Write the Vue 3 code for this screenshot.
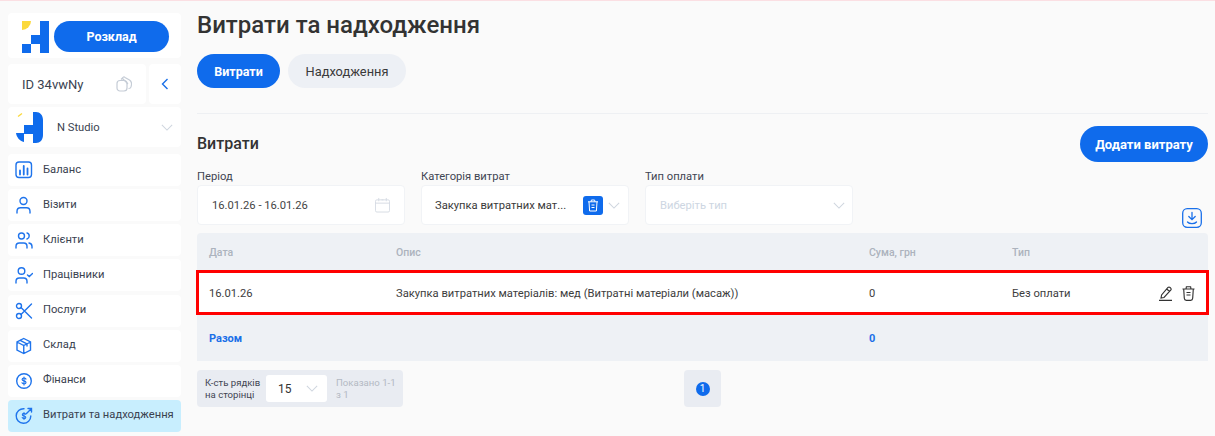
<script setup>
const menu = [
  { label: 'Баланс', icon: 'chart' },
  { label: 'Візити', icon: 'user' },
  { label: 'Клієнти', icon: 'users' },
  { label: 'Працівники', icon: 'check' },
  { label: 'Послуги', icon: 'scissors' },
  { label: 'Склад', icon: 'box' },
  { label: 'Фінанси', icon: 'coin' },
  { label: 'Витрати та надходження', icon: 'coinout', active: true }
]
</script>

<template>
  <div class="page">
    <aside class="side">
      <div class="card logo-card">
        <svg class="logo" width="27" height="32" viewBox="0 0 27 32">
          <path d="M0 0h9a9 9 0 0 1-9 9z" fill="#fbd93c" />
          <path d="M18 0h9v32h-9V23H9v-9h9zM0 23h9v9H0z" fill="#0f6bec" />
        </svg>
        <button class="pill sched">Розклад</button>
      </div>
      <div class="id-row">
        <div class="card id-card">
          <span>ID 34vwNy</span>
          <svg width="16" height="16" viewBox="0 0 16 16" fill="none" stroke="#c5ccd6" stroke-width="1.2">
            <rect x="1" y="4.5" width="10" height="10.5" rx="3" />
            <path d="M5 3.5 7 1.4c.6-.5 1.400-.5 2 0l4.500 2.700c1.500 1 2.200 2.500 2 4.400l-.5 2.500c-.2 1-1 1.500-2.500 1.500M6 1.800 12 8" />
          </svg>
        </div>
        <div class="card back-card">
          <svg width="8" height="12" viewBox="0 0 8 12" fill="none" stroke="#1a6fe8" stroke-width="1.4"><path d="M6.500 1 1.500 6l5 5" /></svg>
        </div>
      </div>
      <div class="card studio">
        <svg width="27" height="31" viewBox="0 0 27 31">
          <path d="M2 4.500 6 1.500" stroke="#fbd93c" stroke-width="1.300" fill="none" />
          <path d="M17 0h3c4 0 7 3 7 8v15c0 5-3 8-7 8h-3v-9H8v-9h9zM0 21h8v9C3.500 29 .5 25 0 21z" fill="#0f6bec" />
        </svg>
        <span class="studio-name">N Studio</span>
        <svg width="12" height="7" viewBox="0 0 14 8" fill="none" stroke="#cfd6df" stroke-width="1.200"><path d="M1 1l6 6 6-6" /></svg>
      </div>
      <nav class="menu">
        <a v-for="m in menu" :key="m.label" class="item" :class="{ active: m.active }">
          <svg class="mi" width="18" height="18" viewBox="0 0 18 18" fill="none" stroke="#1f74ec" stroke-width="1.400" stroke-linecap="round">
            <template v-if="m.icon === 'chart'">
              <rect x="1" y="1" width="15.500" height="15.500" rx="3" />
              <path d="M5 9.500V13.500M8.750 5V13.500M12.500 7.500V13.500" stroke-width="1.800" />
            </template>
            <template v-else-if="m.icon === 'user'">
              <circle cx="8.500" cy="5" r="3.500" />
              <path d="M2 17v-1.500c0-2.500 1.500-3.700 3.500-3.700h6c2 0 3.500 1.200 3.500 3.700V17" />
            </template>
            <template v-else-if="m.icon === 'users'">
              <circle cx="6.500" cy="5" r="3" />
              <path d="M1 17v-1.500c0-2.200 1.400-3.500 3.300-3.500h4.400c1.900 0 3.300 1.300 3.300 3.500V17M12 2c1.500.3 2.200 1.500 2.200 3s-.7 2.500-2.200 3M14 12c2 .3 3 1.800 3 3.500V17" />
            </template>
            <template v-else-if="m.icon === 'check'">
              <circle cx="6.500" cy="5" r="3.300" />
              <path d="M1 17v-1.500c0-2.200 1.400-3.500 3.300-3.500h4.400c1.900 0 3.300 1.300 3.300 3.500V17M12.500 9l1.800 1.600L17.500 7.500" />
            </template>
            <template v-else-if="m.icon === 'scissors'">
              <circle cx="4" cy="4" r="2.500" />
              <circle cx="4" cy="14" r="2.500" />
              <path d="M6 5.500 16.500 16M6 12.500 16.500 2" />
            </template>
            <template v-else-if="m.icon === 'box'">
              <path d="M8.750 1.500 15.500 5v8l-6.750 3.500L2 13V5zM2 5l6.750 3.500L15.500 5M8.750 8.500v8M5.200 3.300l6.800 3.600V9" />
            </template>
            <template v-else-if="m.icon === 'coin'">
              <circle cx="9" cy="9" r="7.300" />
              <path d="M11 7.100C10.500 6.300 9.800 6 9 6c-1.100 0-1.900.6-1.900 1.500 0 2 3.900.9 3.900 2.900 0 .9-.9 1.500-2 1.500-.9 0-1.600-.3-2-1.100M9 5v8" stroke-width="1.200" />
            </template>
            <template v-else>
              <path d="M15.800 9A7.300 7.300 0 1 1 9 1.700M11.500 6.500 16.500 1.500M13 1.500h3.500V5" />
              <path d="M10.700 7.300C10.300 6.600 9.700 6.400 9 6.400c-1 0-1.700.5-1.700 1.300 0 1.800 3.500.8 3.500 2.600 0 .8-.8 1.300-1.800 1.300-.8 0-1.400-.3-1.800-1M9 5.500v7" stroke-width="1.100" />
            </template>
          </svg>
          <span>{{ m.label }}</span>
        </a>
      </nav>
    </aside>

    <main class="main">
      <h1>Витрати та надходження</h1>
      <div class="tabs">
        <button class="pill tab-on">Витрати</button>
        <button class="pill tab-off">Надходження</button>
      </div>
      <div class="rule"></div>
      <div class="head-row">
        <h2>Витрати</h2>
        <button class="pill add">Додати витрату</button>
      </div>

      <div class="filters">
        <div class="field">
          <label>Період</label>
          <div class="input">
            <span class="date">16.01.26 - 16.01.26</span>
            <svg width="15" height="16" viewBox="0 0 16 16" fill="none" stroke="#d5dbe3" stroke-width="1"><rect x=".5" y="2.500" width="15" height="13" rx="1.500" /><path d="M.5 6h15M4 .5v3.500M12 .5v3.500M7 2.500h2" /></svg>
          </div>
        </div>
        <div class="field">
          <label>Категорія витрат</label>
          <div class="input cat">
            <span class="cat-text">Закупка витратних мат...</span>
            <span class="del">
              <svg width="12" height="13" viewBox="0 0 12 13" fill="none" stroke="#fff" stroke-width="1"><path d="M1 2.800h10M4 2.800 4.400 1h3.200L8 2.800M2 2.800l.6 9.200h6.800l.6-9.200M4.500 6h3M4.500 8.500h3" /></svg>
            </span>
            <svg width="12" height="7" viewBox="0 0 14 8" fill="none" stroke="#cfd6df" stroke-width="1.200"><path d="M1 1l6 6 6-6" /></svg>
          </div>
        </div>
        <div class="field">
          <label>Тип оплати</label>
          <div class="input sel">
            <span class="ph">Виберіть тип</span>
            <svg width="12" height="7" viewBox="0 0 14 8" fill="none" stroke="#cfd6df" stroke-width="1.200"><path d="M1 1l6 6 6-6" /></svg>
          </div>
        </div>
        <svg class="dl" width="20" height="20" viewBox="0 0 20 20" fill="none" stroke="#1a70ea" stroke-width="1.300" stroke-linecap="round">
          <rect x=".7" y=".7" width="18.600" height="18.600" rx="4.500" />
          <path d="M10 4.500v7M6.800 8.500 10 11.700l3.200-3.200M5.500 14c1 1.200 2.500 1.700 4.500 1.700s3.500-.5 4.500-1.700" />
        </svg>
      </div>

      <section class="table">
        <div class="tr th"><span>Дата</span><span>Опис</span><span>Сума, грн</span><span>Тип</span></div>
        <div class="tr row">
          <span>16.01.26</span>
          <span>Закупка витратних матеріалів: мед (Витратні матеріали (масаж))</span>
          <span>0</span>
          <span class="type-cell">
            Без оплати
            <span class="acts">
              <svg width="15" height="15" viewBox="0 0 14 15" fill="none" stroke="#333" stroke-width="1.150"><path d="M.5 14.400h13M2.500 12l.6-3L9.500 1.500c.6-.6 1.400-.6 2 0l.7.700c.6.600.6 1.300 0 1.900L5.500 11.500zM8.300 3l2.700 2.500" /></svg>
              <svg width="13" height="15" viewBox="0 0 13 15" fill="none" stroke="#333" stroke-width="1.150"><path d="M.5 3h12M4 3l.4-2.300h4.200L9 3M1.700 3l.6 9.300c.1 1.300.8 2 2 2h4.400c1.200 0 1.900-.7 2-2L11.300 3M4.500 6.500h4M4.500 9h4" /></svg>
            </span>
          </span>
        </div>
        <div class="tr total"><span>Разом</span><span></span><span>0</span><span></span></div>
      </section>

      <div class="pager">
        <div class="per">
          <span class="per-label">К-сть рядків<br />на сторінці</span>
          <div class="per-sel">
            <span>15</span>
            <svg width="12" height="7" viewBox="0 0 14 8" fill="none" stroke="#cfd6df" stroke-width="1.200"><path d="M1 1l6 6 6-6" /></svg>
          </div>
          <span class="shown">Показано 1-1<br />з 1</span>
        </div>
        <div class="pages"><span class="num">1</span></div>
      </div>
    </main>
  </div>
</template>

<style>
html, body { margin: 0; background: #fafafa; }
</style>

<style scoped>
.page {
  display: flex;
  width: 1215px;
  height: 436px;
  box-sizing: border-box;
  overflow: hidden;
  border-top: 1px solid #fbdfe3;
  background: #fafafa;
  font-family: Roboto, sans-serif;
  color: #3a4250;
  font-size: 11.200px;
}
.side {
  width: 173px;
  margin-left: 8px;
  padding-top: 12px;
  display: flex;
  flex-direction: column;
}
.card { background: #fff; border-radius: 4px; }
.logo-card {
  height: 45px;
  display: flex;
  align-items: center;
  padding: 2px 12px 0 14px;
  box-sizing: border-box;
  gap: 5px;
}
.logo { flex: none; }
.pill {
  border: 0;
  border-radius: 18px;
  font-family: inherit;
  display: flex;
  align-items: center;
  justify-content: center;
}
.sched {
  width: 115px;
  height: 31px;
  background: #0f6bec;
  color: #fff;
  font-size: 12.500px;
  font-weight: 700;
}
.id-row { display: flex; gap: 3px; margin-top: 6px; }
.id-card {
  width: 138px;
  height: 40px;
  display: flex;
  align-items: center;
  justify-content: space-between;
  padding: 0 14px;
  box-sizing: border-box;
  font-size: 13px;
}
.back-card { width: 32px; height: 40px; display: flex; align-items: center; justify-content: center; }
.studio {
  height: 40px;
  margin-top: 3px;
  display: flex;
  align-items: center;
  padding: 0 8px;
  box-sizing: border-box;
}
.studio-name { margin-left: 14px; font-size: 11.200px; flex: 1; }
.menu { display: flex; flex-direction: column; gap: 3.150px; margin-top: 7px; }
.item {
  height: 32px;
  background: #fff;
  border-radius: 4px;
  display: flex;
  align-items: center;
  padding: 0 0 2px 7px;
  box-sizing: border-box;
  font-size: 11.200px;
  white-space: nowrap;
}
.item.active { background: #c8eefe; }
.mi { flex: none; margin: 2px 10px 0 0; }

.main { width: 1011px; margin-left: 16px; }
h1 {
  margin: 10px 0 0;
  font-size: 24px;
  line-height: 28px;
  font-weight: 500;
  color: #333;
}
.tabs { display: flex; gap: 8px; margin-top: 15px; }
.tab-on, .tab-off { height: 34px; font-size: 12.500px; }
.tab-on { width: 83px; background: #0f6bec; color: #fff; font-weight: 700; }
.tab-off { width: 118px; background: #edf0f5; color: #3a3a3a; font-size: 12.800px; font-weight: 400; }
.rule { height: 1px; background: #eef0f3; margin-top: 25px; }
.head-row { display: flex; align-items: center; justify-content: space-between; margin-top: 12px; }
h2 { margin: 0 0 2px; font-size: 16px; font-weight: 500; color: #333; }
.add { width: 128px; height: 36px; background: #0f6bec; color: #fff; font-size: 13px; font-weight: 700; }
.filters { display: flex; gap: 16px; margin-top: 7px; position: relative; }
.field { width: 208px; }
label { display: block; font-size: 11.200px; line-height: 14px; height: 15px; padding-top: 1px; color: #3f4552; }
.input {
  height: 40px;
  background: #fff;
  border: 1px solid #f1f3f6;
  border-radius: 4px;
  box-sizing: border-box;
  display: flex;
  align-items: center;
  padding: 0 14px;
  justify-content: space-between;
}
.sel { padding-right: 7px; }
.date { color: #444; }
.cat { padding: 0 8px 0 13px; justify-content: flex-start; }
.cat-text { flex: 1; color: #3a3a3a; white-space: nowrap; }
.del {
  width: 20px; height: 19px; border-radius: 3px; background: #0f6bec;
  display: flex; align-items: center; justify-content: center; margin-right: 5px;
}
.ph { color: #cdd6e2; }
.dl { position: absolute; right: 6px; top: 39px; }
.table { margin-top: 8px; background: #eef1f5; border-radius: 4px 4px 0 0; }
.tr {
  display: grid;
  grid-template-columns: 187px 473px 143px 1fr;
  align-items: center;
  box-sizing: border-box;
}
.tr > span { padding-left: 12px; }
.th { height: 37px; padding-top: 1px; font-size: 10.500px; font-weight: 500; color: #acb3bd; }
.row {
  height: 45px;
  padding-top: 1px;
  background: #fff;
  box-shadow: inset 0 3px 0 #f00, inset 0 -3px 0 #f00, inset 2px 0 0 #f00, inset -2px 0 0 #f00, 1px 0 0 #f00, -1px 0 0 #f00;
  color: #3d3d3d;
}
.type-cell { display: flex; align-items: center; }
.acts { margin-left: auto; margin-right: 13px; display: flex; gap: 9px; align-items: center; }
.total { height: 46px; font-weight: 700; color: #1a6fe8; font-size: 11px; }
.pager { margin-top: 9px; display: flex; position: relative; }
.per {
  width: 206px;
  height: 37px;
  background: #e9ecf2;
  border-radius: 4px;
  display: flex;
  align-items: center;
  padding-left: 8px;
  box-sizing: border-box;
  font-size: 9.600px;
  line-height: 12px;
}
.per-label { width: 61px; color: #3f4552; flex: none; }
.per-sel {
  width: 61px;
  height: 27px;
  background: #fff;
  border-radius: 3px;
  display: flex;
  align-items: center;
  justify-content: space-between;
  padding: 0 9px 0 12px;
  box-sizing: border-box;
  font-size: 12px;
  color: #333;
  flex: none;
}
.shown { margin-left: 9px; color: #b3b9c3; white-space: nowrap; }
.pages {
  margin-left: 281px;
  width: 37px;
  height: 37px;
  background: #e9ecf2;
  border-radius: 4px;
  display: flex;
  align-items: center;
  justify-content: center;
}
.num {
  width: 14px; height: 14px; border-radius: 50%; background: #0f6bec;
  color: #fff; font-size: 10px; display: flex; align-items: center; justify-content: center;
}
</style>
